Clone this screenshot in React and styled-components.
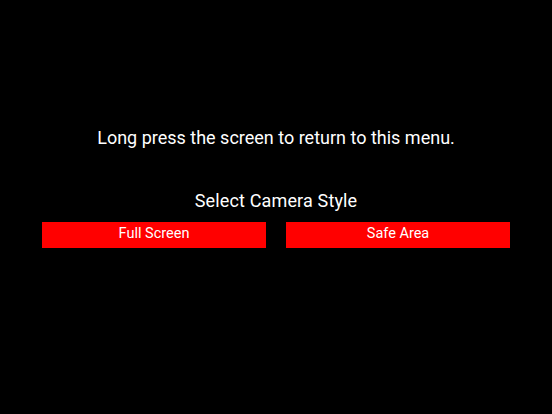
import React from "react";
import styled, { createGlobalStyle } from "styled-components";

const Global = createGlobalStyle`
  html, body { margin: 0; padding: 0; background: #000; }
  body { font-family: Roboto, "Noto Sans", sans-serif; }
`;

const Screen = styled.div`
  width: 552px;
  height: 414px;
  background: #000;
  display: flex;
  flex-direction: column;
  align-items: center;
  padding-top: 126px;
  box-sizing: border-box;
  color: #fff;
`;

const Hint = styled.div`
  font-size: 18px;
  line-height: 24px;
`;

const Title = styled.div`
  margin-top: 39px;
  font-size: 18px;
  line-height: 24px;
  letter-spacing: 0.15px;
`;

const Row = styled.div`
  margin-top: 9px;
  display: flex;
  gap: 20px;
  width: 468px;
`;

const Button = styled.button`
  flex: 1;
  height: 26px;
  border: none;
  background: #ff0000;
  color: #fff;
  font-family: Roboto, "Noto Sans", sans-serif;
  font-size: 14.5px;
  line-height: 24px;
  padding: 0 0 2px;
  cursor: pointer;
`;

export default function App() {
  return (
    <>
      <Global />
      <Screen>
        <Hint>Long press the screen to return to this menu.</Hint>
        <Title>Select Camera Style</Title>
        <Row>
          <Button>Full Screen</Button>
          <Button>Safe Area</Button>
        </Row>
      </Screen>
    </>
  );
}
